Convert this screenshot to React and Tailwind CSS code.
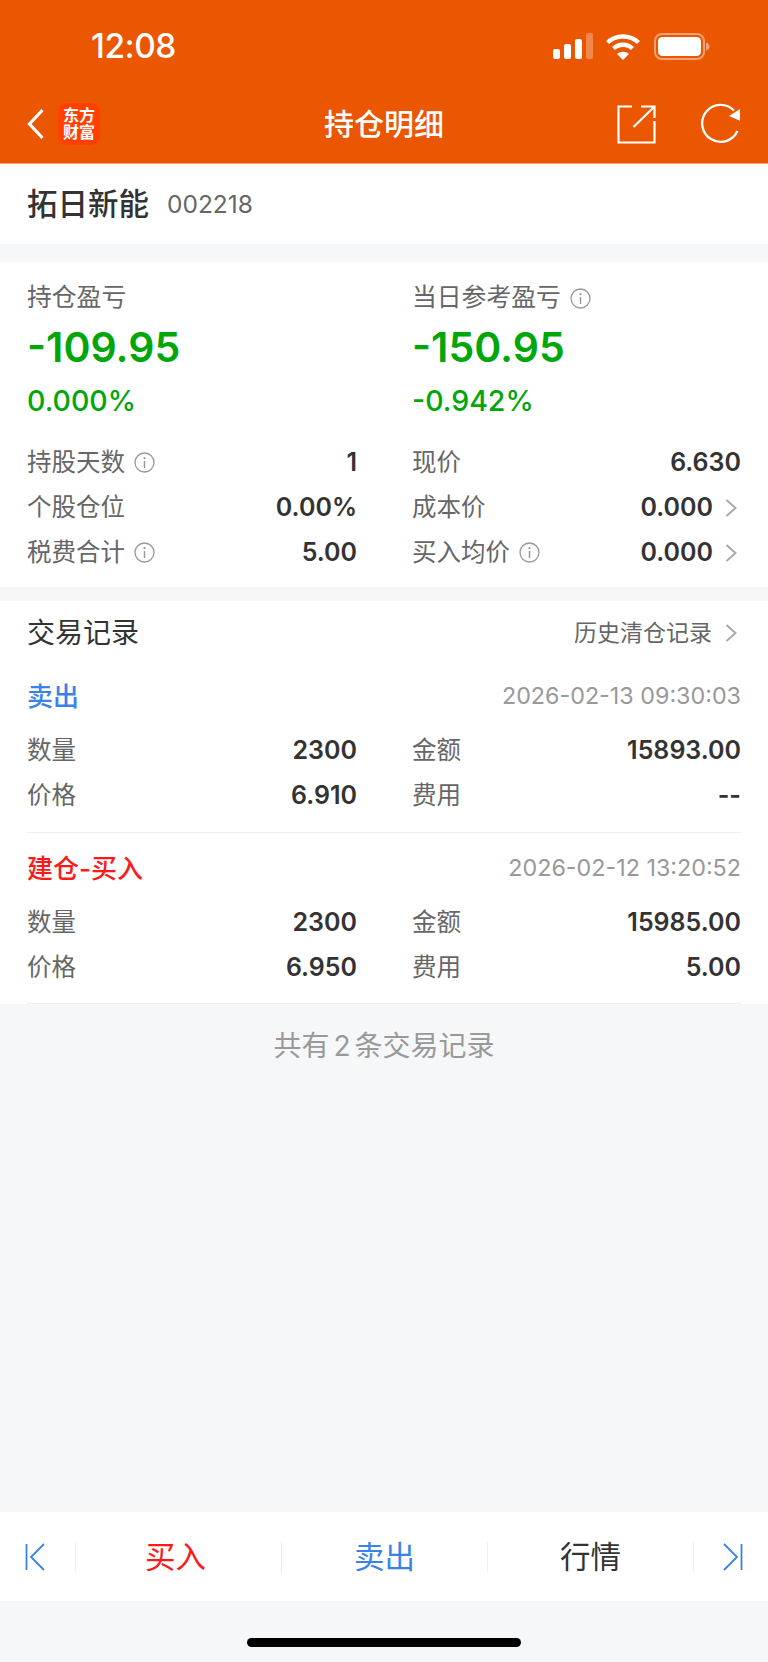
import React from 'react';

// 持仓明细 page: position summary and trade history for one stock

const InfoIcon = () => (
  <svg width="21" height="21" viewBox="0 0 21 21" fill="none" className="ml-[9px] shrink-0">
    <circle cx="10.5" cy="10.5" r="9.5" stroke="#999" strokeWidth="1.3" />
    <circle cx="10.5" cy="6.2" r="1.1" fill="#999" />
    <path d="M10.5 9v7" stroke="#999" strokeWidth="1.5" />
  </svg>
);

const Chevron = ({ className = '' }) => (
  <svg width="13" height="18" viewBox="0 0 13 18" fill="none" className={className}>
    <path d="M1.500 1 10.500 9 1.500 17" stroke="#aaa" strokeWidth="2" />
  </svg>
);

const StatusIcons = () => (
  <div className="flex items-center">
    <svg width="40" height="26" viewBox="0 0 40 26" fill="#fff">
      <rect x="0" y="16" width="7" height="10" rx="2" />
      <rect x="11" y="11" width="7" height="15" rx="2" />
      <rect x="22" y="6" width="7" height="20" rx="2" />
      <rect x="33" y="0" width="7" height="26" rx="2" opacity="0.3" />
    </svg>
    <svg width="34" height="27" viewBox="0 0 34 27" fill="none" className="ml-[13px]">
      <path d="M1.500 9.500C10 1.500 24 1.500 32.500 9.500" stroke="#fff" strokeWidth="4.400" />
      <path d="M7.500 15.500c5.400-5 13.600-5 19 0" stroke="#fff" strokeWidth="4.400" />
      <path d="M17 27l-6-6c3.500-3 8.500-3 12 0z" fill="#fff" />
    </svg>
    <svg width="56" height="27" viewBox="0 0 56 27" fill="none" className="ml-[14px]">
      <rect x="1" y="1" width="49" height="25" rx="7" stroke="#fff" strokeOpacity="0.45" strokeWidth="2" />
      <rect x="4" y="4" width="43" height="19" rx="4.500" fill="#fff" />
      <path d="M52 9.500c2 .5 3.500 2 3.500 4s-1.500 3.500-3.500 4z" fill="#fff" fillOpacity="0.45" />
    </svg>
  </div>
);

const Header = () => (
  <div className="bg-[#eb5600] border-b border-[#f5a27a] h-[164px] text-white">
    <div className="h-[92px] flex items-center justify-between pl-[91px] pr-[58px]">
      <span className="text-[33.5px] font-medium tracking-[-0.5px]">12:08</span>
      <StatusIcons />
    </div>
    <div className="grid grid-cols-[1fr_auto_1fr] items-center h-[64px] px-[27px]">
      <div className="flex items-center">
        <svg width="17" height="32" viewBox="0 0 17 32" fill="none">
          <path d="M15.500 2 2.500 16 15.500 30" stroke="#fff" strokeWidth="3.200" />
        </svg>
        <div className="ml-[14px] w-[42px] h-[42px] rounded-[9px] bg-[#ff4000] flex flex-col items-center justify-center text-[16px] leading-[17px] font-bold">
          <span>东方</span>
          <span>财富</span>
        </div>
      </div>
      <div className="text-[30px] font-medium">持仓明细</div>
      <div className="flex items-center justify-end">
        <svg width="40" height="40" viewBox="0 0 40 40" fill="none" stroke="#fff" strokeWidth="2.200">
          <path d="M15 2.500H1.500v36h36V17" />
          <path d="M16.500 23 37.500 2.500M24 2.500h13.500V14" />
        </svg>
        <svg width="40" height="42" viewBox="0 0 40 42" fill="none" className="ml-[44px]">
          <path d="M33 7.500A18.500 18.500 0 1 0 36.500 28" stroke="#fff" strokeWidth="2.300" />
          <path d="M39 6v11.700L28 13z" fill="#fff" />
        </svg>
      </div>
    </div>
  </div>
);

// label / value row shared by the summary and trade grids
const Row = ({ label, value, info, arrow }) => (
  <div className="h-[45px] flex items-center justify-between">
    <div className="flex items-center text-[24.5px] text-[#666]">
      {label}
      {info && <InfoIcon />}
    </div>
    <div className="flex items-center text-[25px] font-semibold text-[#333]">
      {value}
      {arrow && <Chevron className="ml-[12px] mr-[3px]" />}
    </div>
  </div>
);

const Summary = ({ title, info, amount, percent }) => (
  <div>
    <div className="h-[36px] flex items-center text-[24.8px] text-[#666]">
      {title}
      {info && <InfoIcon />}
    </div>
    <div className="h-[64px] flex items-center text-[41px] font-semibold text-[#00a60a]">{amount}</div>
    <div className="h-[42px] flex items-center text-[28.5px] font-medium text-[#00a60a]">{percent}</div>
  </div>
);

const Trade = ({ side, sideClass, time, rows, boxClass }) => (
  <div className={`border-b border-[#eeeeee] ${boxClass}`}>
    <div className="h-[63px] flex items-center justify-between">
      <span className={`text-[26px] font-medium ${sideClass}`}>{side}</span>
      <span className="text-[23.3px] text-[#999]">{time}</span>
    </div>
    <div className="grid grid-cols-[330px_1fr] gap-x-[55px]">
      {rows.map((r) => (
        <Row key={r[0] + r[1]} label={r[0]} value={r[1]} />
      ))}
    </div>
  </div>
);

export default function App() {
  return (
    <div className="w-[768px] h-[1662px] flex flex-col bg-[#f6f7f9] font-['Inter','Noto_Sans_CJK_SC',sans-serif]">
      <Header />

      <div className="bg-white h-[80px] flex items-center px-[27px]">
        <span className="text-[30.5px] font-medium text-[#333]">拓日新能</span>
        <span className="ml-[18px] text-[24.5px] text-[#666]">002218</span>
      </div>

      <div className="bg-white mt-[18px] h-[325px] px-[27px] pt-[18px]">
        <div className="grid grid-cols-[330px_1fr] gap-x-[55px]">
          <Summary title="持仓盈亏" amount="-109.95" percent="0.000%" />
          <Summary title="当日参考盈亏" info amount="-150.95" percent="-0.942%" />
        </div>
        <div className="grid grid-cols-[330px_1fr] gap-x-[55px] mt-[18px]">
          <div>
            <Row label="持股天数" value="1" info />
            <Row label="个股仓位" value="0.00%" />
            <Row label="税费合计" value="5.00" info />
          </div>
          <div>
            <Row label="现价" value="6.630" />
            <Row label="成本价" value="0.000" arrow />
            <Row label="买入均价" value="0.000" info arrow />
          </div>
        </div>
      </div>

      <div className="bg-white mt-[14px] h-[403px] px-[27px]">
        <div className="h-[64px] flex items-center justify-between">
          <span className="text-[28px] text-[#333]">交易记录</span>
          <div className="flex items-center text-[23px] text-[#666]">
            历史清仓记录
            <Chevron className="ml-[13px] mr-[3px]" />
          </div>
        </div>
        <Trade
          boxClass="h-[168px]"
          side="卖出"
          sideClass="text-[#3b82e8]"
          time="2026-02-13 09:30:03"
          rows={[['数量', '2300'], ['金额', '15893.00'], ['价格', '6.910'], ['费用', '--']]}
        />
        <Trade
          boxClass="h-[171px] pt-[4px]"
          side="建仓-买入"
          sideClass="text-[#ff1a1a]"
          time="2026-02-12 13:20:52"
          rows={[['数量', '2300'], ['金额', '15985.00'], ['价格', '6.950'], ['费用', '5.00']]}
        />
      </div>

      <div className="mt-[22px] text-center text-[28px] leading-[40px] text-[#999] [word-spacing:-4px]">共有 2 条交易记录</div>

      <div className="flex-1" />

      <div className="bg-white h-[89px] flex items-center">
        <div className="w-[75px] flex justify-center pr-[6px]">
          <svg width="20" height="28" viewBox="0 0 20 28" fill="none" stroke="#3b82e8" strokeWidth="1.800">
            <path d="M1.500 1v26M19 1 6 14l13 13" />
          </svg>
        </div>
        <div className="flex-1 border-l border-[#eeeeee] h-[30px] flex items-center justify-center text-[30.5px] text-[#ff1a1a]">
          <span className="mr-[6px]">买入</span>
        </div>
        <div className="flex-1 border-l border-[#eeeeee] h-[30px] flex items-center justify-center text-[30.5px] text-[#3b82e8]">卖出</div>
        <div className="flex-1 border-l border-[#eeeeee] h-[30px] flex items-center justify-center text-[30.5px] text-[#333]">行情</div>
        <div className="w-[75px] border-l border-[#eeeeee] h-[30px] flex items-center justify-center pl-[3px]">
          <svg width="20" height="28" viewBox="0 0 20 28" fill="none" stroke="#3b82e8" strokeWidth="1.800">
            <path d="M18.500 1v26M1 1l13 13L1 27" />
          </svg>
        </div>
      </div>

      <div className="h-[61px] flex justify-center pt-[37px]">
        <div className="w-[274px] h-[9px] rounded-full bg-black" />
      </div>
    </div>
  );
}
